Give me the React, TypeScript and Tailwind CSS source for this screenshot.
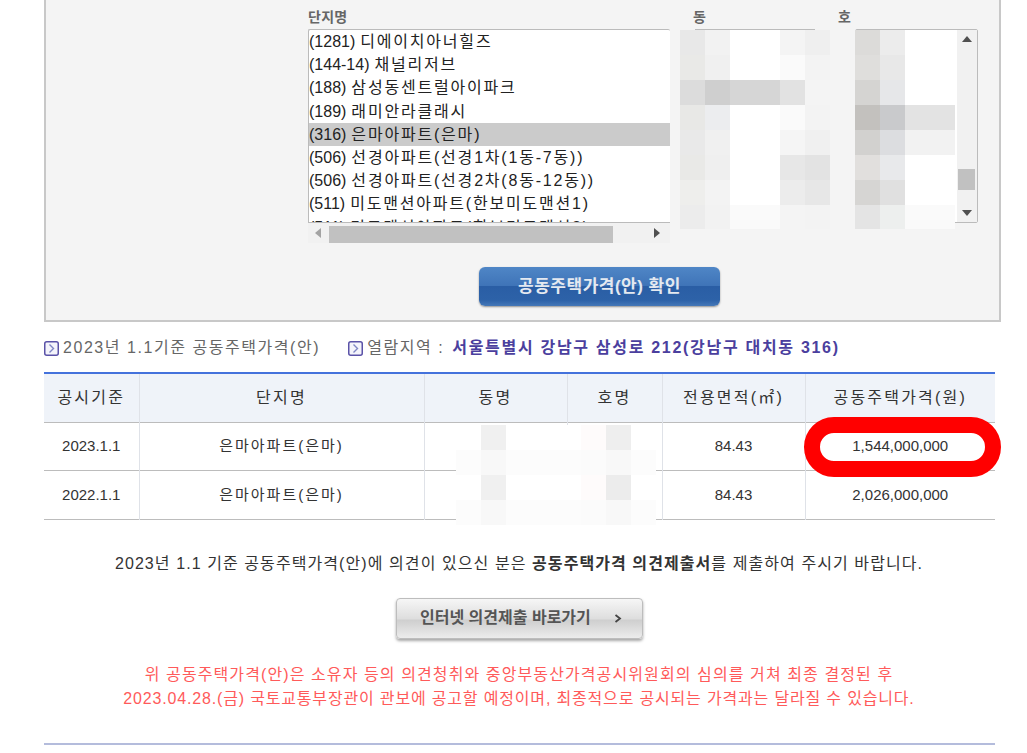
const complexes = [
  ["(1281)", "디에이치아너힐즈"],
  ["(144-14)", "채널리저브"],
  ["(188)", "삼성동센트럴아이파크"],
  ["(189)", "래미안라클래시"],
  ["(316)", "은마아파트(은마)"],
  ["(506)", "선경아파트(선경1차(1동-7동))"],
  ["(506)", "선경아파트(선경2차(8동-12동))"],
  ["(511)", "미도맨션아파트(한보미도맨션1)"],
  ["(511)", "미도맨션아파트(한보미도맨션2)"],
];

// blurred-out cells, left to right
const dongCells = [
  ["#e8e8e8", "#f2f2f2", "#ffffff", "#ffffff", "#f4f4f4", "#efefef"],
  ["#e9e9e7", "#f0f0f0", "#ffffff", "#ffffff", "#fafafa", "#f3f3f3"],
  ["#dcdcdc", "#cfcfcf", "#d6d6d6", "#d6d6d6", "#e2e2e2", "#f4f4f4"],
  ["#e8e8e6", "#ecedef", "#ffffff", "#ffffff", "#fafafa", "#f3f3f3"],
  ["#e9e9e9", "#f0f0f0", "#ffffff", "#ffffff", "#f5f5f5", "#f0f0f0"],
  ["#e9e9e7", "#efefef", "#ffffff", "#ffffff", "#e7e7e7", "#e3e3e3"],
  ["#eeeeec", "#f3f3f3", "#ffffff", "#ffffff", "#ececec", "#e7e7e7"],
  ["#ececec", "#f2f2f2", "#fafafa", "#fafafa", "#f4f4f4", "#f3f3f3"],
];

const hoCells = [
  ["#dcdbd9", "#ececec", "#ffffff", "#ffffff"],
  ["#dfdedc", "#e8e8e8", "#ffffff", "#ffffff"],
  ["#d5d4d2", "#e6e7e9", "#ffffff", "#ffffff"],
  ["#c3c1be", "#c9cacc", "#e3e3e3", "#e3e3e3"],
  ["#d2d1cf", "#dcdde0", "#f2f2f2", "#f2f2f2"],
  ["#e1dfdd", "#e8e9eb", "#ffffff", "#ffffff"],
  ["#d6d5d3", "#e0e0e0", "#ffffff", "#ffffff"],
  ["#e4e4e4", "#edefee", "#fafafa", "#fafafa"],
];

const tableCells = [
  ["transparent", "#f0f0f0", "#ffffff", "#ffffff", "#ffffff", "#fefbfb", "#eeeeee", "#ffffff"],
  ["#fcfcfc", "#f8f8f8", "#fcfcfc", "#fcfcfc", "#fcfcfc", "#fbfbfb", "#f8f8f8", "#fcfcfc"],
  ["transparent", "#f0f0f0", "#ffffff", "#ffffff", "#ffffff", "#fefbfb", "#ececec", "#ffffff"],
  ["#fcfcfc", "#f8f8f8", "#fcfcfc", "#fcfcfc", "#fcfcfc", "#fbfbfb", "#f8f8f8", "#fcfcfc"],
];

function Mosaic({ cells, className }: { cells: string[][]; className: string }) {
  return (
    <div className={className}>
      {cells.map((row, r) => (
        <div key={r} className="flex h-[25px]">
          {row.map((color, c) => (
            <div key={c} className="w-[25px] h-full" style={{ backgroundColor: color }} />
          ))}
        </div>
      ))}
    </div>
  );
}

function BulletIcon() {
  return (
    <svg width="15" height="15" viewBox="0 0 15 15" className="shrink-0">
      <rect x="0.75" y="0.75" width="13.5" height="13.5" rx="2" fill="#f4f4fb" stroke="#5a52a8" strokeWidth="1.5" />
      <path d="M5.5 3.5 L9.5 7.5 L5.5 11.5" fill="none" stroke="#7f86c4" strokeWidth="1.4" />
    </svg>
  );
}

function Arrow({ dir, color }: { dir: "up" | "down" | "left" | "right"; color: string }) {
  const points = {
    up: "0,8 5,2 10,8",
    down: "0,2 5,8 10,2",
    left: "8,0 2,5 8,10",
    right: "2,0 8,5 2,10",
  }[dir];
  return (
    <svg width="10" height="10" viewBox="0 0 10 10">
      <polygon points={points} fill={color} />
    </svg>
  );
}

export default function App() {
  return (
    <div className="h-[753px] overflow-hidden bg-white font-['Liberation_Sans','Noto_Sans_CJK_KR',sans-serif]">
      {/* Search panel */}
      <div className="relative ml-[44px] w-[957px] h-[322px] bg-[#f4f4f4] border-x-2 border-b-2 border-[#c8c8c8]">
        <div className="flex pl-[262px] pt-[8px]">
          <div className="w-[362px]">
            <div className="h-[21px] text-[14px] leading-[18px] font-bold tracking-[0.3px] text-[#666]">단지명</div>
            <div className="border border-[#bbb] rounded-t-[2px] bg-white h-[194px] overflow-hidden border-r-0">
              {complexes.map(([code, name], i) => (
                <div
                  key={i}
                  className={`h-[23.2px] leading-[23px] text-[16px] text-[#222] whitespace-nowrap ${
                    i === 4 ? "bg-[#cbcbcb]" : ""
                  }`}
                >
                  <span className="mr-[5px]">{code}</span>
                  <span className="tracking-[1.8px]">{name}</span>
                </div>
              ))}
            </div>
            <div className="h-[20px] bg-[#f1f1f1] flex items-center justify-between pl-[5px] pr-[8px] relative">
              <Arrow dir="left" color="#a3a3a3" />
              <div className="absolute left-[21px] top-[3px] w-[284px] h-[17px] bg-[#c1c1c1]" />
              <Arrow dir="right" color="#505050" />
            </div>
          </div>
          <div className="ml-[23px] w-[122px]">
            <div className="h-[21px] text-[14px] leading-[18px] font-bold text-[#666]">동</div>
            <div className="ml-[2px] w-[120px] border-t border-[#bbb] h-[194px] bg-white" />
          </div>
          <div className="ml-[23px] w-[140px]">
            <div className="h-[21px] text-[14px] leading-[18px] font-bold text-[#666]">호</div>
            <div className="ml-[17px] w-[123px] h-[194px] border border-[#bbb] rounded-[2px] bg-white flex justify-end">
              <div className="w-[20px] bg-[#f1f1f1] flex flex-col items-center justify-between py-[4px] relative">
                <Arrow dir="up" color="#505050" />
                <div className="absolute left-[1px] top-[139px] w-[17px] h-[21px] bg-[#c1c1c1]" />
                <Arrow dir="down" color="#505050" />
              </div>
            </div>
          </div>
        </div>

        <Mosaic cells={dongCells} className="absolute left-[634px] top-[30px] h-[199px] overflow-hidden" />
        <Mosaic cells={hoCells} className="absolute left-[809px] top-[30px] h-[199px] overflow-hidden" />

        <div className="ml-[433px] mt-[24px] w-[241px] h-[39px] rounded-[6px] bg-[linear-gradient(#4f86c6_0%,#3f74b8_48%,#2a5ea5_50%,#2d62a8_85%,#4578b8_100%)] shadow-[0_1px_2px_rgba(0,0,0,0.4)] flex items-center justify-center text-[17px] tracking-[0.5px] font-bold text-[#e4e9f0]">
          공동주택가격(안) 확인
        </div>
      </div>

      {/* Result heading */}
      <div className="ml-[44px] mt-[16px] h-[20px] flex items-center text-[16px] tracking-[1.55px] text-[#666]">
        <BulletIcon />
        <span className="ml-[4px]">2023년 1.1기준 공동주택가격(안)</span>
        <span className="ml-[28px]"><BulletIcon /></span>
        <span className="ml-[4px]">열람지역 :</span>
        <span className="ml-[8px] font-bold tracking-[1.7px] text-[#4b3f9e]">서울특별시 강남구 삼성로 212(강남구 대치동 316)</span>
      </div>

      {/* Price table */}
      <div className="relative ml-[44px] mt-[14px] w-[951px]">
        <table className="w-full table-fixed border-collapse border-t-2 border-[#4472dc] text-[#333]">
          <colgroup>
            <col className="w-[95px]" />
            <col className="w-[285px]" />
            <col className="w-[143px]" />
            <col className="w-[95px]" />
            <col className="w-[143px]" />
            <col className="w-[190px]" />
          </colgroup>
          <thead>
            <tr className="h-[49px] bg-[#eff3f9] text-[16px] border-b border-[#bcbcbc]">
              {["공시기준", "단지명", "동명", "호명", "전용면적(㎡)", "공동주택가격(원)"].map((label, i) => (
                <th key={label} className={`font-normal tracking-[2.2px] ${i < 5 ? "border-r border-[#dfe2e8]" : ""}`}>
                  {label}
                </th>
              ))}
            </tr>
          </thead>
          <tbody className="text-[15px] text-center">
            {[
              ["2023.1.1", "1,544,000,000"],
              ["2022.1.1", "2,026,000,000"],
            ].map(([date, price]) => (
              <tr key={date} className="h-[48.5px] border-b border-[#bcbcbc]">
                <td className="border-r border-[#dfe2e8]">{date}</td>
                <td className="border-r border-[#dfe2e8] tracking-[2px]">은마아파트(은마)</td>
                <td className="border-r border-[#dfe2e8]" />
                <td className="border-r border-[#dfe2e8]" />
                <td className="border-r border-[#dfe2e8]">84.43</td>
                <td>{price}</td>
              </tr>
            ))}
          </tbody>
        </table>
        <Mosaic cells={tableCells} className="absolute left-[412px] top-[53px]" />
        {/* hand-drawn highlight over the price */}
        <div className="absolute left-[760px] top-[45px] w-[197px] h-[60px] rounded-full border-[16px] border-[#ff0000]" />
      </div>

      {/* Notice */}
      <p className="mt-[33px] text-center text-[16px] leading-[22px] text-[#333] pl-[11px] tracking-[1.08px]">
        2023년 1.1 기준 공동주택가격(안)에 의견이 있으신 분은 <b>공동주택가격 의견제출서</b>를 제출하여 주시기 바랍니다.
      </p>

      <div className="ml-[396px] mt-[23px] w-[247px] h-[41px] rounded-[4px] border border-[#bdbdbd] bg-[linear-gradient(#f6f6f6_0%,#dedede_50%,#cfcfcf_55%,#ececec_100%)] shadow-[0_2px_3px_rgba(0,0,0,0.35)] flex items-center pl-[23px] text-[16px] font-bold text-[#555]">
        인터넷 의견제출 바로가기
        <svg width="8" height="9" viewBox="0 0 8 9" className="ml-[23px]">
          <path d="M1.5 1 L6 4.5 L1.5 8" fill="none" stroke="#444" strokeWidth="1.8" />
        </svg>
      </div>

      <div className="mt-[24px] text-center text-[16px] leading-[24px] text-[#ff5a5a] pl-[11px]">
        <p className="tracking-[1.1px]">위 공동주택가격(안)은 소유자 등의 의견청취와 중앙부동산가격공시위원회의 심의를 거쳐 최종 결정된 후</p>
        <p className="tracking-[0.83px]">2023.04.28.(금) 국토교통부장관이 관보에 공고할 예정이며, 최종적으로 공시되는 가격과는 달라질 수 있습니다.</p>
      </div>

      <div className="ml-[44px] mt-[32px] w-[951px] h-[2px] bg-[#b4bcdc]" />
    </div>
  );
}
